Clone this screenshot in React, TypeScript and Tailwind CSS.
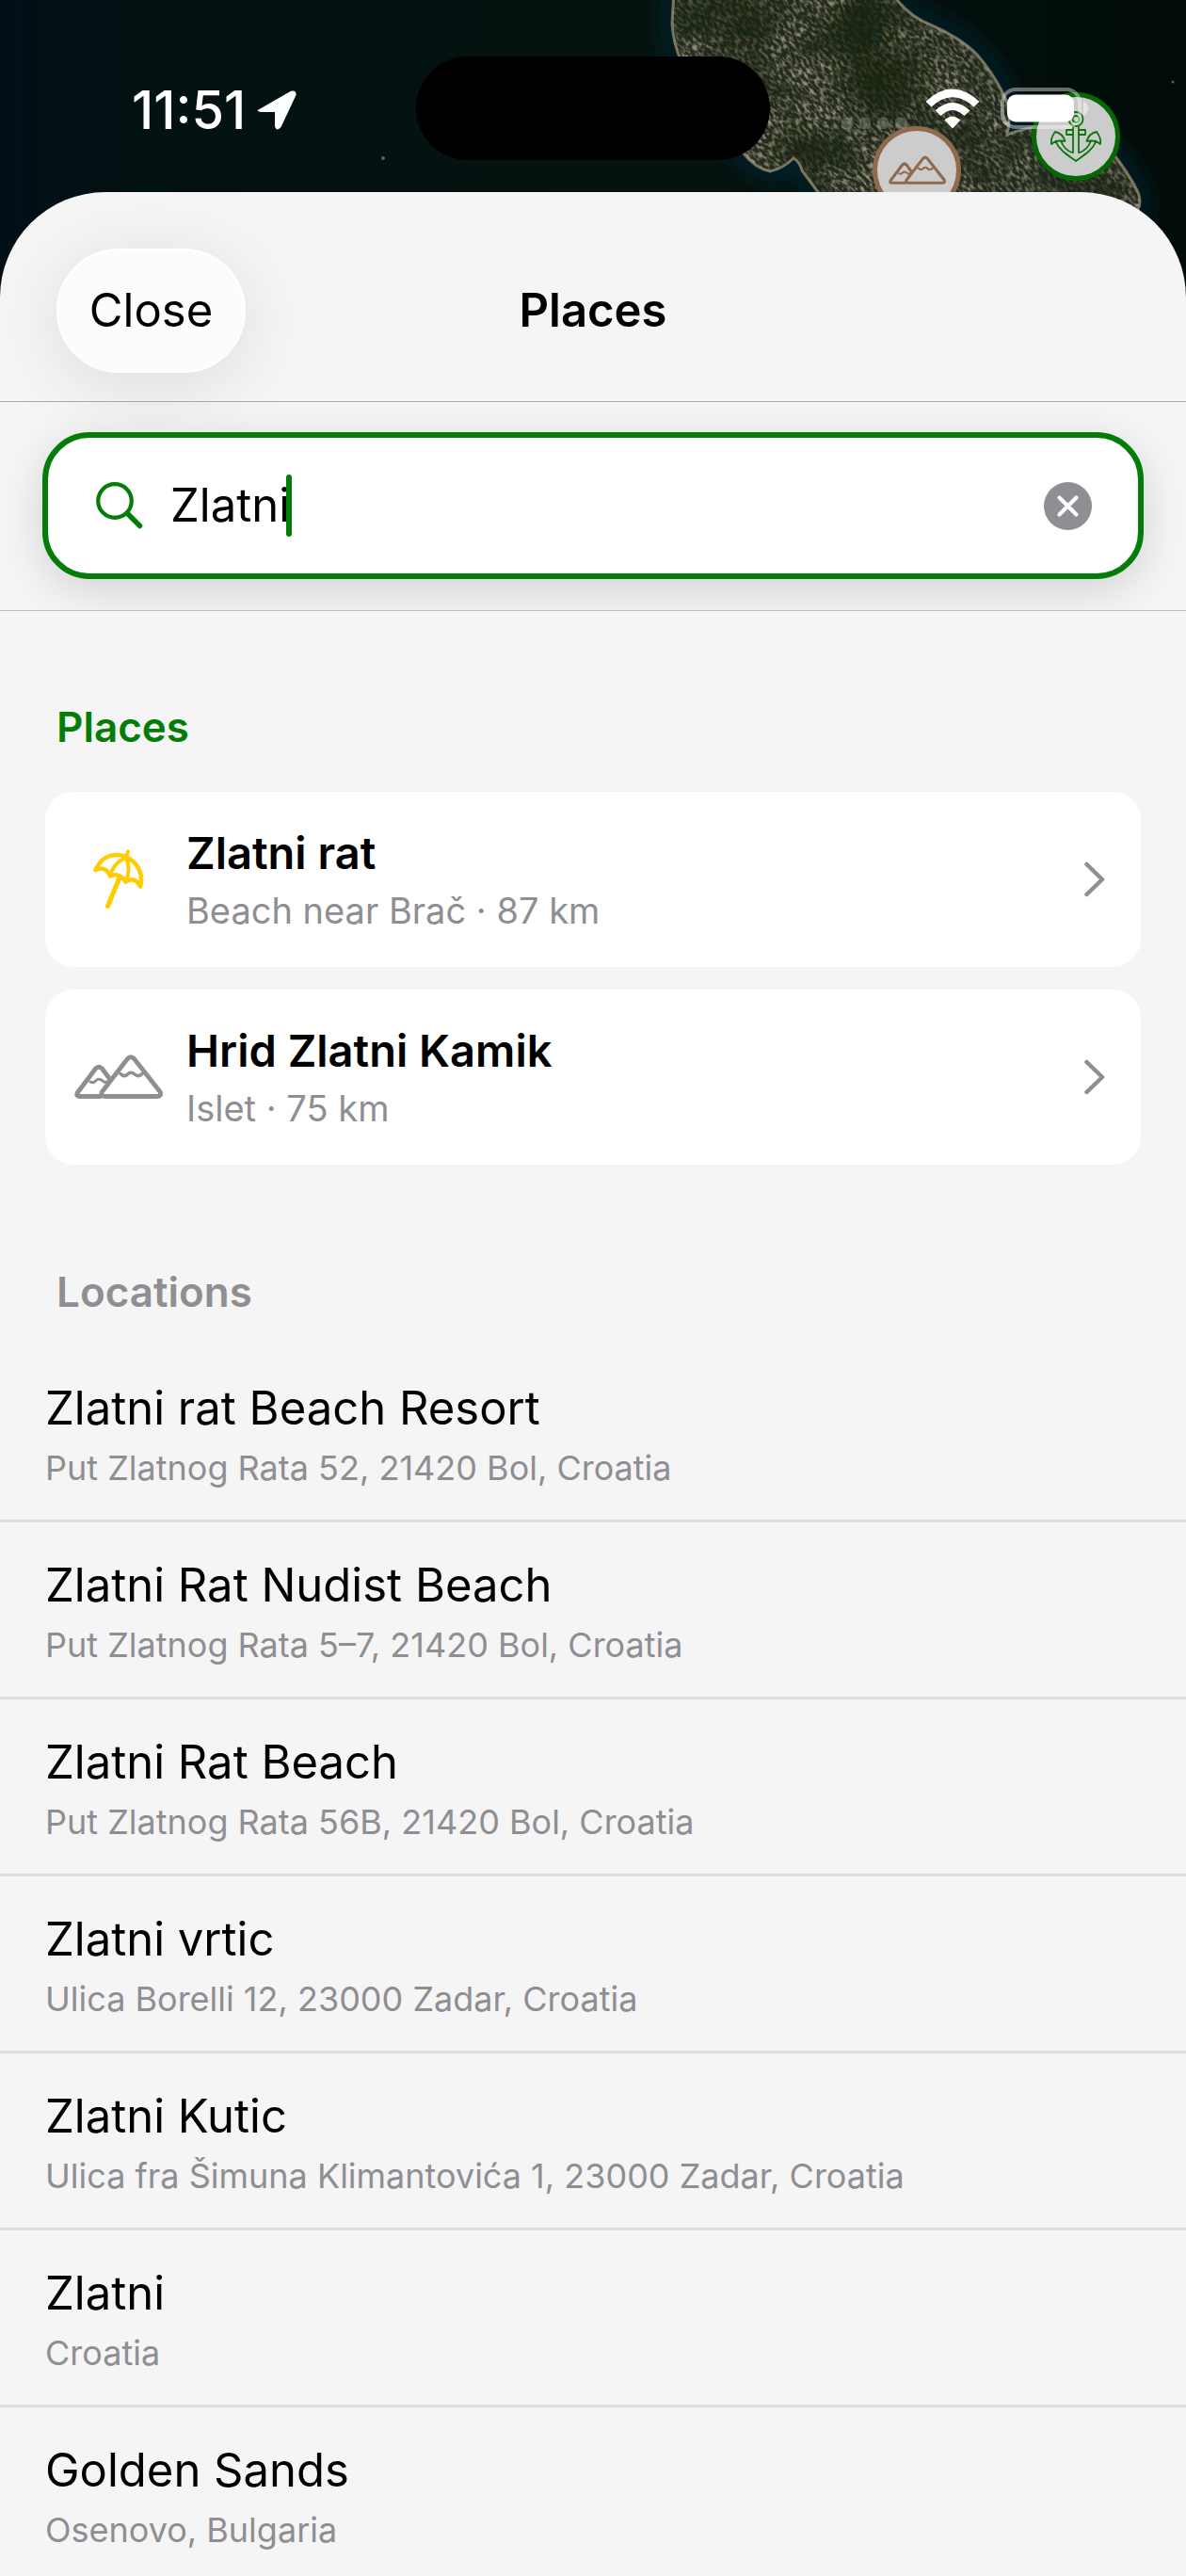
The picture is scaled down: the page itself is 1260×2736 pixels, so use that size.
import { useState } from "react";

const places = [
  { id: 1, icon: "beach", name: "Zlatni rat", detail: "Beach near Brač · 87 km" },
  { id: 2, icon: "islet", name: "Hrid Zlatni Kamik", detail: "Islet · 75 km" },
];

const locations = [
  { name: "Zlatni rat Beach Resort", address: "Put Zlatnog Rata 52, 21420 Bol, Croatia" },
  { name: "Zlatni Rat Nudist Beach", address: "Put Zlatnog Rata 5–7, 21420 Bol, Croatia" },
  { name: "Zlatni Rat Beach", address: "Put Zlatnog Rata 56B, 21420 Bol, Croatia" },
  { name: "Zlatni vrtic", address: "Ulica Borelli 12, 23000 Zadar, Croatia" },
  { name: "Zlatni Kutic", address: "Ulica fra Šimuna Klimantovića 1, 23000 Zadar, Croatia" },
  { name: "Zlatni", address: "Croatia" },
  { name: "Golden Sands", address: "Osenovo, Bulgaria" },
];

const LAND =
  "M716 -10 L714 25 Q715 45 724 66 Q750 130 790 163 Q803 179 818 182 Q832 179 843 168 Q850 172 852 181 L872 208 L900 260 L1200 260 L1209 222 Q1213 215 1209 204 Q1198 182 1180 160 L1110 134 Q1090 135 1070 143 Q1076 118 1066 100 Q1054 76 1038 58 Q1020 40 990 27 Q962 16 946 -10 Z";

function MountainPaths() {
  return (
    <g fill="none" strokeLinejoin="round" strokeLinecap="round">
      <path
        d="M28 44.500H5.500Q1.500 44.500 3.200 40.800L22.500 15Q26 11.500 29.500 15L36.500 24.500"
        strokeWidth="4.800"
      />
      <path d="M17 29Q20 31 22.500 28Q26 24.500 30 28Q33 31 36 28" strokeWidth="3" />
      <path
        d="M32 44.500Q27.500 43.500 29.500 39.500L56.500 4.500Q60 0.800 63.500 4.500L91 39.500Q93 44 88.500 44.500Z"
        strokeWidth="4.800"
      />
      <path d="M49 20.500Q53 24.500 56.500 21Q60 17.500 64 21Q68 24.500 72 20.500" strokeWidth="3.500" />
    </g>
  );
}

function BeachIcon() {
  return (
    <svg width="54" height="64" viewBox="0 0 54 64" fill="none" stroke="#ffcc00" strokeWidth="4.500" strokeLinecap="round" strokeLinejoin="round" aria-hidden="true">
      <path d="M2.500 22C9 7 22 3 35 8C47 14 54 26 50 39.500C47 33 42 30 34.500 34.500C30 28 25 25.500 18 28.500C15 20.500 9 19 2.500 22Z" />
      <path d="M37 2.500L34.500 9C25 13 20 20 18 28.500M34.500 9C39 17 38 27 34.500 34.500" strokeWidth="4" />
      <path d="M28 30L15.500 60.500" strokeWidth="5" />
    </svg>
  );
}

function IsletIcon() {
  return (
    <svg width="94" height="48" viewBox="0 0 94 48" stroke="#8e8e93" aria-hidden="true">
      <MountainPaths />
    </svg>
  );
}

function Chevron() {
  return (
    <svg width="22" height="38" viewBox="0 0 22 38" fill="none" stroke="#8e8e93" strokeWidth="4.500" strokeLinecap="round" strokeLinejoin="round" aria-hidden="true">
      <path d="M2.500 3L19 19L2.500 35" />
    </svg>
  );
}

// Satellite view behind the sheet
function MapBackdrop() {
  return (
    <svg className="absolute left-0 top-0 w-full" viewBox="0 0 1260 380" aria-hidden="true">
      <defs>
        <clipPath id="land">
          <path d={LAND} />
        </clipPath>
        <linearGradient id="sea" x1="0" x2="1">
          <stop offset="0" stopColor="#020f17" />
          <stop offset="0.15" stopColor="#031211" />
          <stop offset="0.6" stopColor="#04130f" />
          <stop offset="1" stopColor="#010c09" />
        </linearGradient>
        <filter id="grain" x="0" y="0" width="100%" height="100%" colorInterpolationFilters="sRGB">
          <feTurbulence type="fractalNoise" baseFrequency="0.16 0.34" numOctaves="3" seed="7" />
          <feColorMatrix values="0 0 0 0 0.58  0 0 0 0 0.57  0 0 0 0 0.48  3.4 0 0 0 -1.45" />
        </filter>
        <filter id="patches" x="0" y="0" width="100%" height="100%" colorInterpolationFilters="sRGB">
          <feTurbulence type="fractalNoise" baseFrequency="0.012 0.018" numOctaves="3" seed="3" />
          <feColorMatrix values="0 0 0 0 0.09  0 0 0 0 0.14  0 0 0 0 0.08  0 4 0 0 -1.6" />
        </filter>
        <filter id="soft" x="-50%" y="-50%" width="200%" height="200%">
          <feGaussianBlur stdDeviation="12" />
        </filter>
      </defs>
      <rect width="1260" height="380" fill="url(#sea)" />
      <path d={LAND} fill="none" stroke="#052635" strokeWidth="16" filter="url(#soft)" />
      <g clipPath="url(#land)">
        <rect x="690" y="-10" width="540" height="280" fill="#272d20" />
        <g transform="rotate(48 950 100)">
          <rect x="600" y="-250" width="700" height="700" filter="url(#grain)" />
        </g>
        <rect x="690" y="-10" width="540" height="280" filter="url(#patches)" opacity="0.65" />
        <g fill="#15220f" filter="url(#soft)" opacity="0.75">
          <ellipse cx="790" cy="15" rx="32" ry="26" />
          <ellipse cx="915" cy="50" rx="22" ry="60" />
          <ellipse cx="945" cy="85" rx="38" ry="36" />
          <ellipse cx="850" cy="160" rx="24" ry="20" />
        </g>
      </g>
      <path d={LAND} fill="none" stroke="#a3977a" strokeWidth="3" opacity="0.7" />
      <circle cx="407" cy="168" r="2" fill="#59655f" />
      <circle cx="1246" cy="87" r="1.500" fill="#59655f" />

      <circle cx="974" cy="181" r="44.500" fill="#cccccc" stroke="#8f6a4d" strokeWidth="5" />
      <svg x="944" y="165" width="61" height="32" viewBox="0 0 94 48" stroke="#8f6a4d">
        <MountainPaths />
      </svg>

      <circle cx="1143" cy="145" r="44.500" fill="#cccccc" stroke="#056805" strokeWidth="5" />
      <g transform="translate(1143 145)" fill="none" stroke="#0c760c" strokeWidth="1.800" strokeLinejoin="round">
        <circle cx="0" cy="-18.500" r="7.500" />
        <circle cx="0" cy="-18.500" r="3.500" />
        <path d="M-3 -11V17.500M3 -11V17.500M-3 -7H-10V-2H-3M3 -7H10V-2H3" />
        <path d="M-3 17.500C-9 15.500 -14 10 -16 4.500L-11.500 5C-13 0 -17 -4 -22 -5C-25 -1 -27 3 -26 8L-21.500 5C-18 14 -9 19.500 0 26C9 19.500 18 14 21.500 5L26 8C27 3 25 -1 22 -5C17 -4 13 0 11.500 5L16 4.500C14 10 9 15.500 3 17.500" />
        <path d="M-21.500 5L-16 4.500M21.500 5L16 4.500" />
      </g>
    </svg>
  );
}

function StatusBar() {
  return (
    <div className="relative grid h-[204px] grid-cols-[1fr_376px_1fr] content-start pt-[60px] text-white">
      <div className="flex h-[110px] items-center gap-3 pt-1 pl-[140px]">
        <span className="text-[56px] leading-[64px] font-medium">11:51</span>
        <svg width="42" height="42" viewBox="0 0 42 42" fill="white" aria-hidden="true">
          <path d="M2.500 20L36 0.800Q42 -1 41.500 5L25.500 39Q21 44 19 38.500V23H4Q-2 22 2.500 20Z" />
        </svg>
      </div>
      <div className="h-[110px] rounded-full bg-black" />
      <div className="flex h-[110px] items-center pl-[76px]">
        <div className="mt-8 flex gap-[7px]">
          <span className="size-3 rounded bg-white/20" />
          <span className="size-3 rounded bg-white/20" />
          <span className="size-3 rounded bg-white/20" />
          <span className="size-3 rounded bg-white/20" />
        </div>
        <svg className="ml-[20px]" width="58" height="43" viewBox="0 0 58 43" fill="white" aria-hidden="true">
          <path d="M0.500 14Q28.500 -13 57.500 14L51.500 19.500Q28.500 -1 6.500 19.500Z" />
          <path d="M10.500 23.500Q28.500 6.500 47.500 23.500L41.500 29Q28.500 17 16.500 29Z" />
          <path d="M20.500 33.500Q28.500 26 37.500 33.500L29 42.500Z" />
        </svg>
        <svg className="ml-[22px]" width="94" height="44" viewBox="0 0 94 44" aria-hidden="true">
          <rect x="2" y="2" width="82" height="40" rx="14" fill="none" stroke="white" strokeOpacity="0.4" strokeWidth="4" />
          <rect x="7" y="7.500" width="71" height="29" rx="9" fill="white" />
          <path d="M88 14.500Q93 17 93 22Q93 27 88 29.500Z" fill="white" fillOpacity="0.5" />
        </svg>
      </div>
    </div>
  );
}

export default function App() {
  const [query, setQuery] = useState("Zlatni");

  return (
    <main className="relative min-h-screen bg-[#f5f5f5] font-[Inter,'Liberation_Sans',sans-serif] text-black">
      <MapBackdrop />
      <StatusBar />

      <div className="relative rounded-t-[112px] bg-[#f5f5f5]">
        {/* Header */}
        <header className="grid h-[223px] grid-cols-[1fr_auto_1fr] items-center border-b border-[#acacac] px-[60px] pt-[30px]">
          <button
            type="button"
            className="flex h-[132px] w-[201px] items-center justify-center rounded-full border-2 border-white bg-[#fcfcfc] text-[49px] leading-[64px] shadow-[0_12px_80px_rgba(0,0,0,0.1)]"
          >
            Close
          </button>
          <h1 className="text-[49px] leading-[64px] font-semibold">Places</h1>
        </header>

        {/* Search */}
        <div className="relative overflow-hidden border-b border-[#bcbcbe] px-[45px] pt-8 pb-[33px]">
          <div className="flex h-[156px] items-center rounded-[50px] border-6 border-[#047d08] bg-white pr-[49px] pl-[51px] shadow-[0_12px_48px_rgba(0,0,0,0.14)]">
            <label htmlFor="search" aria-label="Search places">
              <svg width="50" height="50" viewBox="0 0 50 50" fill="none" stroke="#047d08" strokeLinecap="round" aria-hidden="true">
                <circle cx="20" cy="20" r="17.800" strokeWidth="4.200" />
                <path d="M33.500 33.500L46.500 46.500" strokeWidth="5.500" />
              </svg>
            </label>
            <input
              id="search"
              type="text"
              value={query}
              onChange={(e) => setQuery(e.target.value)}
              className="ml-[29px] field-sizing-content bg-transparent text-[49px] leading-[64px] caret-transparent outline-none"
            />
            <span className="-ml-1 h-[66px] w-[6px] rounded-full bg-[#047d08]" />
            <button type="button" aria-label="Clear" onClick={() => setQuery("")} className="ml-auto">
              <svg width="51" height="51" viewBox="0 0 51 51" aria-hidden="true">
                <circle cx="25.500" cy="25.500" r="25.500" fill="#8e8e93" />
                <path d="M16.500 16.500L34.500 34.500M34.500 16.500L16.500 34.500" stroke="white" strokeWidth="4.200" strokeLinecap="round" />
              </svg>
            </button>
          </div>
        </div>

        {/* Places */}
        <section className="px-12 pt-[95px]">
          <h2 className="px-3 text-[44px] leading-[56px] font-semibold text-[#047d08]">Places</h2>
          <ul className="mt-[41px] flex flex-col gap-6">
            {places.map((place) => (
              <li key={place.id}>
                <button type="button" className="flex w-full items-center rounded-[30px] bg-white pt-[35px] pr-[38px] pb-9 pl-[30px] text-left">
                  <span className="flex w-24 justify-center">
                    {place.icon === "beach" ? <BeachIcon /> : <IsletIcon />}
                  </span>
                  <span className="ml-6 flex-1">
                    <span className="block text-[47px] leading-[60px] font-semibold">{place.name}</span>
                    <span className="mt-[7px] block text-[38px] leading-[48px] text-[#8e8e93]">{place.detail}</span>
                  </span>
                  <Chevron />
                </button>
              </li>
            ))}
          </ul>
        </section>

        {/* Locations */}
        <section className="pt-[107px]">
          <h2 className="px-[60px] text-[44px] leading-[56px] font-semibold text-[#8e8e93]">Locations</h2>
          <ul className="mt-[29px]">
            {locations.map((location) => (
              <li key={location.name} className="border-b-3 border-[#dedede] last:border-b-0">
                <button type="button" className="block w-full px-12 pt-[35px] pb-6 text-left">
                  <span className="block text-[49px] leading-[64px]">{location.name}</span>
                  <span className="mt-[9px] mb-[9px] block text-[36px] leading-[44px] text-[#8e8e93]">{location.address}</span>
                </button>
              </li>
            ))}
          </ul>
        </section>
      </div>
    </main>
  );
}
